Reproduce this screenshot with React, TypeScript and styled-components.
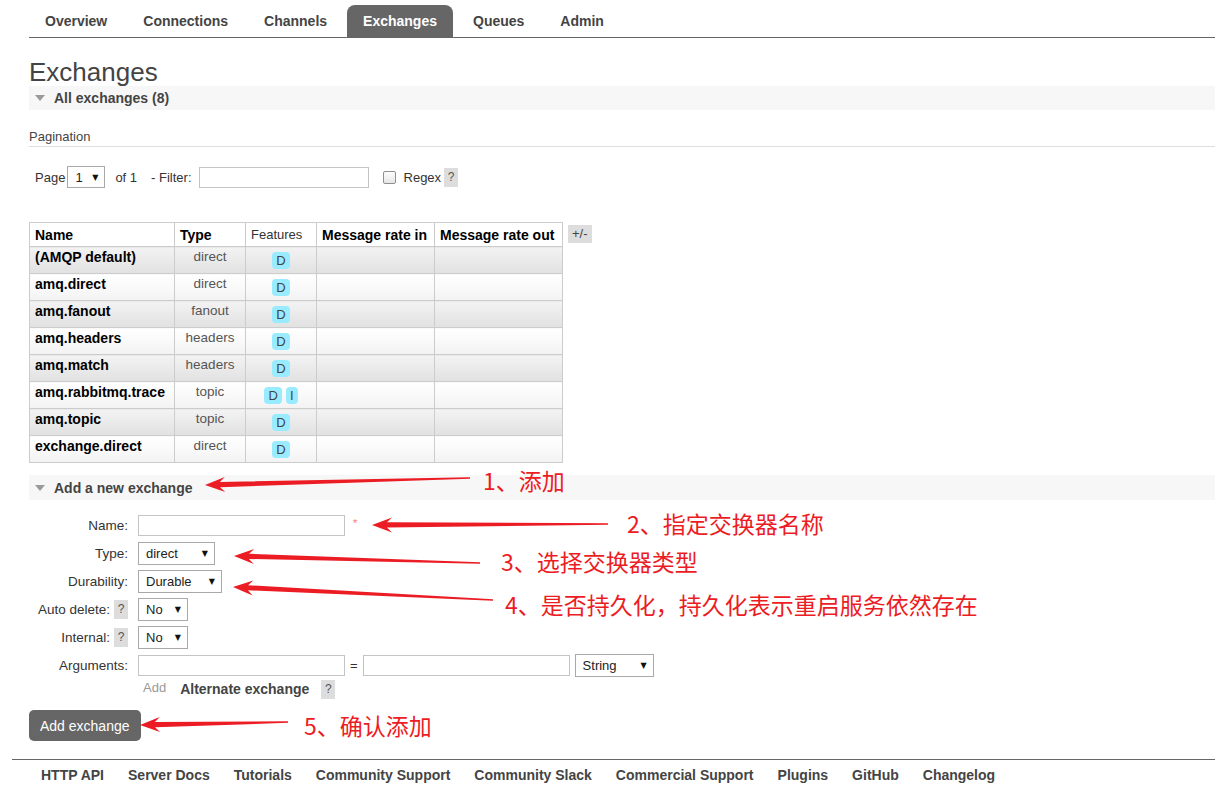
import React from 'react';
import styled, { createGlobalStyle } from 'styled-components';

const GlobalStyle = createGlobalStyle`
  html, body { margin: 0; padding: 0; background: #fff; }
  body {
    font-family: "Liberation Sans", Arial, sans-serif;
    font-size: 13px;
    color: #444;
  }
  * { box-sizing: border-box; }
`;

const Page = styled.div`
  position: relative;
  width: 1215px;
  min-height: 803px;
  overflow: hidden;
`;

const Main = styled.div`
  padding-left: 29px;
`;

const Nav = styled.nav`
  display: flex;
  margin-top: 5px;
  border-bottom: 1px solid #666;
`;

const Tab = styled.div<{ $active?: boolean }>`
  height: 32px;
  line-height: 32px;
  padding: 0 16px;
  margin-right: 4px;
  font-size: 14px;
  font-weight: bold;
  border-radius: 8px 8px 0 0;
  color: ${p => (p.$active ? '#fff' : '#444')};
  background: ${p => (p.$active ? '#666' : 'transparent')};
`;

const Title = styled.h1`
  margin: 20px 0 0;
  font-size: 26px;
  font-weight: normal;
  line-height: 28px;
  color: #444;
`;

const SectionHeader = styled.div<{ $h: number }>`
  display: flex;
  align-items: center;
  height: ${p => p.$h}px;
  padding-left: 6px;
  background: #f7f7f7;
  font-weight: bold;
  font-size: 14px;
  color: #444;
`;

const Triangle = styled.span`
  width: 0;
  height: 0;
  border-left: 5px solid transparent;
  border-right: 5px solid transparent;
  border-top: 6px solid #9a9a9a;
  margin-right: 9px;
`;

const SubTitle = styled.div`
  margin-top: 18px;
  line-height: 18px;
  font-size: 13px;
  color: #444;
  border-bottom: 1px solid #ddd;
`;

const PageRow = styled.div`
  display: flex;
  align-items: center;
  margin-top: 19px;
  height: 22px;
  padding-left: 6px;
  color: #333;
`;

const Spaced = styled.span<{ $ml: number }>`
  margin-left: ${p => p.$ml}px;
  white-space: pre;
`;

const FakeSelect = styled.div<{ $w: number; $h?: number; $ml?: number }>`
  display: flex;
  align-items: center;
  justify-content: space-between;
  width: ${p => p.$w}px;
  height: ${p => p.$h ?? 23}px;
  margin-left: ${p => p.$ml ?? 0}px;
  padding: 0 6px 0 7px;
  border: 1px solid #a9a9a9;
  background: #fff;
  color: #222;
  font-size: 13px;
`;

const Arrow = styled.span`
  font-size: 8px;
  color: #111;
  font-family: "DejaVu Sans", sans-serif;
`;

const TextInput = styled.div<{ $w: number; $ml?: number }>`
  width: ${p => p.$w}px;
  height: 21px;
  margin-left: ${p => p.$ml ?? 0}px;
  border: 1px solid #c4c4c4;
  background: #fff;
`;

const CheckBox = styled.span`
  display: inline-block;
  width: 13px;
  height: 13px;
  margin-left: 14px;
  border: 1px solid #8f8f8f;
  border-radius: 2px;
  background: linear-gradient(#fdfdfd, #e6e6e6);
`;

const Help = styled.span<{ $ml?: number }>`
  display: inline-block;
  width: 14px;
  height: 19px;
  line-height: 19px;
  margin-left: ${p => p.$ml ?? 0}px;
  text-align: center;
  background: #ddd;
  color: #555;
  font-size: 12px;
  font-weight: normal;
`;

const TableArea = styled.div`
  display: flex;
  align-items: flex-start;
  margin-top: 34px;
`;

const Table = styled.table`
  border-collapse: collapse;
  border: 1px solid #ccc;
  table-layout: fixed;
  width: 533px;
`;

const Th = styled.th<{ $w: number; $normal?: boolean }>`
  width: ${p => p.$w}px;
  height: 24px;
  padding: 0 5px;
  text-align: left;
  border: 1px solid #ccc;
  font-size: ${p => (p.$normal ? '13px' : '14px')};
  font-weight: ${p => (p.$normal ? 'normal' : 'bold')};
  color: ${p => (p.$normal ? '#333' : '#000')};
  background: #fff;
  white-space: nowrap;
`;

const Td = styled.td<{ $odd: boolean; $align?: string; $kind?: 'name' | 'type' }>`
  height: 27px;
  padding: 2px 5px 0;
  vertical-align: top;
  line-height: 16px;
  border: 1px solid #ccc;
  text-align: ${p => p.$align ?? 'left'};
  font-weight: ${p => (p.$kind === 'name' ? 'bold' : 'normal')};
  font-size: ${p => (p.$kind === 'name' ? '14px' : '13.5px')};
  color: ${p => (p.$kind === 'name' ? '#000' : '#555')};
  white-space: nowrap;
  background: ${p =>
    p.$odd
      ? 'linear-gradient(to bottom, #f3f3f3, #e1e1e1)'
      : 'linear-gradient(to bottom, #ffffff, #f3f3f3)'};
`;

const Badge = styled.span`
  display: inline-block;
  vertical-align: top;
  margin: 3px 2px 0;
  height: 17px;
  line-height: 17px;
  padding: 0 4px;
  border-radius: 4px;
  background: #99ebff;
  color: #444;
  font-size: 13px;
`;

const PlusMinus = styled.span`
  margin: 3px 0 0 5px;
  height: 18px;
  line-height: 18px;
  padding: 0 4px;
  background: #ddd;
  color: #444;
  font-size: 13px;
`;

const AddHeaderWrap = styled.div`
  margin-top: 12px;
`;

const Form = styled.div`
  display: grid;
  grid-template-columns: 99px auto;
  column-gap: 10px;
  grid-auto-rows: 28px;
  margin-top: 11px;
  align-items: center;
`;

const Label = styled.div`
  display: flex;
  align-items: center;
  justify-content: flex-end;
  gap: 4px;
  color: #333;
  font-size: 13.5px;
  white-space: nowrap;
`;

const Controls = styled.div`
  display: flex;
  align-items: center;
`;

const Required = styled.span`
  margin-left: 8px;
  align-self: flex-start;
  margin-top: 2px;
  color: #f77;
  font-size: 11px;
`;

const Equals = styled.span`
  margin: 0 5px;
  color: #333;
`;

const AddRow = styled.div`
  display: flex;
  align-items: center;
  height: 20px;
  padding-left: 109px;
`;

const MutedLink = styled.span`
  margin-left: 5px;
  margin-top: -3px;
  color: #999;
`;

const BoldText = styled.span`
  margin-left: 14px;
  font-weight: bold;
  font-size: 14px;
  color: #444;
`;

const Button = styled.button`
  display: block;
  margin-top: 11px;
  height: 31px;
  padding: 0 11px;
  border: none;
  border-radius: 5px;
  background: #666;
  color: #fff;
  font-family: "Liberation Sans", Arial, sans-serif;
  font-size: 14px;
`;

const Footer = styled.footer`
  margin: 18px 0 0 12px;
  border-top: 1px solid #666;
  display: flex;
  gap: 24px;
  padding-left: 29px;
  height: 31px;
  align-items: center;
`;

const FooterLink = styled.span`
  font-weight: bold;
  font-size: 14px;
  color: #444;
`;

const Overlay = styled.svg`
  position: absolute;
  left: 0;
  top: 0;
  pointer-events: none;
`;

const Note = styled.div<{ $x: number; $y: number }>`
  position: absolute;
  left: ${p => p.$x}px;
  top: ${p => p.$y - 15}px;
  line-height: 30px;
  font-family: "Noto Sans CJK SC", "Noto Sans", sans-serif;
  font-size: 23px;
  color: #ec1c24;
  white-space: nowrap;
`;

type Pt = [number, number];

function arrowPoints(tail: Pt, tip: Pt): string {
  const dx = tip[0] - tail[0];
  const dy = tip[1] - tail[1];
  const len = Math.hypot(dx, dy);
  const ux = dx / len;
  const uy = dy / len;
  const nx = -uy;
  const ny = ux;
  const L = 20;
  const W = 7.5;
  const at = (d: number, w: number): string =>
    `${(tip[0] - ux * d + nx * w).toFixed(1)},${(tip[1] - uy * d + ny * w).toFixed(1)}`;
  return [
    at(len, 0.8),
    at(L - 5, 2.6),
    at(L, W),
    at(0, 0),
    at(L, -W),
    at(L - 5, -2.6),
    at(len, -0.8),
  ].join(' ');
}

const arrows: [Pt, Pt][] = [
  [[470, 478], [205, 485]],
  [[608, 524], [372, 525]],
  [[480, 563], [234, 556]],
  [[493, 600], [233, 587]],
  [[288, 722], [140, 725]],
];

const notes: { x: number; y: number; text: string }[] = [
  { x: 483, y: 480, text: '1、添加' },
  { x: 627, y: 523, text: '2、指定交换器名称' },
  { x: 501, y: 561, text: '3、选择交换器类型' },
  { x: 505, y: 604, text: '4、是否持久化，持久化表示重启服务依然存在' },
  { x: 304, y: 725, text: '5、确认添加' },
];

const rows: [string, string, string[]][] = [
  ['(AMQP default)', 'direct', ['D']],
  ['amq.direct', 'direct', ['D']],
  ['amq.fanout', 'fanout', ['D']],
  ['amq.headers', 'headers', ['D']],
  ['amq.match', 'headers', ['D']],
  ['amq.rabbitmq.trace', 'topic', ['D', 'I']],
  ['amq.topic', 'topic', ['D']],
  ['exchange.direct', 'direct', ['D']],
];

const tabs = ['Overview', 'Connections', 'Channels', 'Exchanges', 'Queues', 'Admin'];
const footerLinks = [
  'HTTP API',
  'Server Docs',
  'Tutorials',
  'Community Support',
  'Community Slack',
  'Commercial Support',
  'Plugins',
  'GitHub',
  'Changelog',
];

export default function App() {
  return (
    <Page>
      <GlobalStyle />
      <Main>
        <Nav>
          {tabs.map(t => (
            <Tab key={t} $active={t === 'Exchanges'}>
              {t}
            </Tab>
          ))}
        </Nav>
        <Title>Exchanges</Title>
        <SectionHeader $h={24}>
          <Triangle />
          All exchanges (8)
        </SectionHeader>
        <SubTitle>Pagination</SubTitle>
        <PageRow>
          <span>Page</span>
          <FakeSelect $w={38} $h={22} $ml={2}>
            <span>1</span>
            <Arrow>▼</Arrow>
          </FakeSelect>
          <Spaced $ml={10}>of 1</Spaced>
          <Spaced $ml={14}>- Filter:</Spaced>
          <TextInput $w={170} $ml={7} />
          <CheckBox />
          <Spaced $ml={8}>Regex</Spaced>
          <Help $ml={3}>?</Help>
        </PageRow>

        <TableArea>
          <Table>
            <thead>
              <tr>
                <Th $w={145}>Name</Th>
                <Th $w={71}>Type</Th>
                <Th $w={71} $normal>
                  Features
                </Th>
                <Th $w={118}>Message rate in</Th>
                <Th $w={128}>Message rate out</Th>
              </tr>
            </thead>
            <tbody>
              {rows.map(([name, type, feats], i) => {
                const odd = i % 2 === 0;
                return (
                  <tr key={name}>
                    <Td $odd={odd} $kind="name">
                      {name}
                    </Td>
                    <Td $odd={odd} $align="center" $kind="type">
                      {type}
                    </Td>
                    <Td $odd={odd} $align="center">
                      {feats.map(f => (
                        <Badge key={f}>{f}</Badge>
                      ))}
                    </Td>
                    <Td $odd={odd} />
                    <Td $odd={odd} />
                  </tr>
                );
              })}
            </tbody>
          </Table>
          <PlusMinus>+/-</PlusMinus>
        </TableArea>

        <AddHeaderWrap>
          <SectionHeader $h={25}>
            <Triangle />
            Add a new exchange
          </SectionHeader>
        </AddHeaderWrap>

        <Form>
          <Label>Name:</Label>
          <Controls>
            <TextInput $w={207} />
            <Required>*</Required>
          </Controls>

          <Label>Type:</Label>
          <Controls>
            <FakeSelect $w={77}>
              <span>direct</span>
              <Arrow>▼</Arrow>
            </FakeSelect>
          </Controls>

          <Label>Durability:</Label>
          <Controls>
            <FakeSelect $w={84}>
              <span>Durable</span>
              <Arrow>▼</Arrow>
            </FakeSelect>
          </Controls>

          <Label>
            Auto delete: <Help>?</Help>
          </Label>
          <Controls>
            <FakeSelect $w={50}>
              <span>No</span>
              <Arrow>▼</Arrow>
            </FakeSelect>
          </Controls>

          <Label>
            Internal: <Help>?</Help>
          </Label>
          <Controls>
            <FakeSelect $w={50}>
              <span>No</span>
              <Arrow>▼</Arrow>
            </FakeSelect>
          </Controls>

          <Label>Arguments:</Label>
          <Controls>
            <TextInput $w={207} />
            <Equals>=</Equals>
            <TextInput $w={207} />
            <FakeSelect $w={79} $ml={5}>
              <span>String</span>
              <Arrow>▼</Arrow>
            </FakeSelect>
          </Controls>
        </Form>
        <AddRow>
          <MutedLink>Add</MutedLink>
          <BoldText>Alternate exchange</BoldText>
          <Help $ml={12}>?</Help>
        </AddRow>

        <Button>Add exchange</Button>
      </Main>

      <Footer>
        {footerLinks.map(l => (
          <FooterLink key={l}>{l}</FooterLink>
        ))}
      </Footer>

      <Overlay width={1215} height={803} viewBox="0 0 1215 803">
        {arrows.map(([tail, tip], i) => (
          <polygon key={i} points={arrowPoints(tail, tip)} fill="#ec1c24" />
        ))}
      </Overlay>
      {notes.map(n => (
        <Note key={n.text} $x={n.x} $y={n.y}>
          {n.text}
        </Note>
      ))}
    </Page>
  );
}
